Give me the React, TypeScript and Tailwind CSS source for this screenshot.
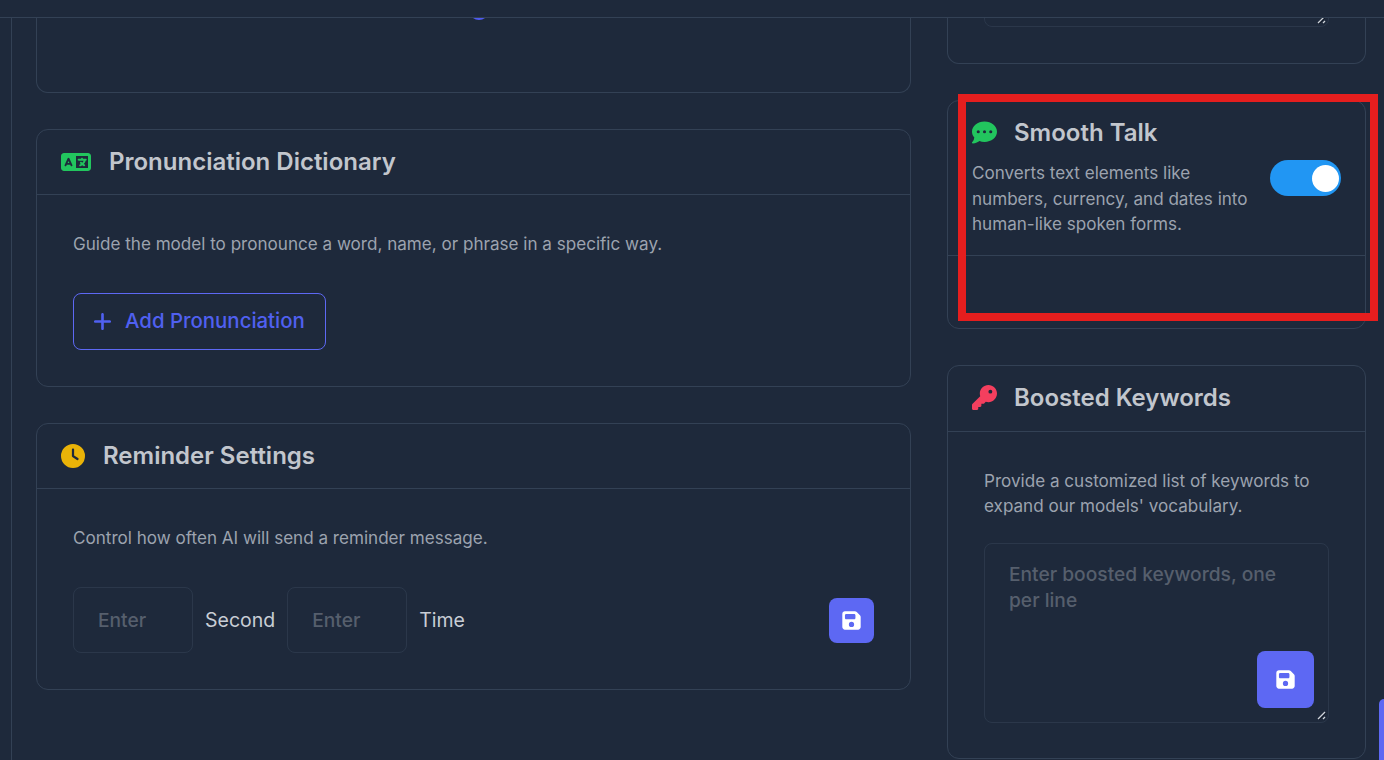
import { FaClock, FaCommentDots, FaFloppyDisk, FaKey, FaLanguage, FaPlus } from 'react-icons/fa6';
import type { ReactNode } from 'react';

function CardHeader({ icon, title, gap, tall }: { icon: ReactNode; title: string; gap: string; tall?: boolean }) {
  return (
    <div className={`flex ${tall ? 'h-[66px] pb-px' : 'h-[65px]'} items-center border-b border-[#334155] px-6 ${gap}`}>
      {icon}
      <h2 className="text-2xl font-semibold text-[#c2c6cd]">{title}</h2>
    </div>
  );
}

function SaveButton({ large }: { large?: boolean }) {
  return (
    <button
      className={
        large
          ? 'absolute right-[15px] bottom-[15px] flex h-[57px] w-[57px] items-center justify-center rounded-lg bg-[#5d68f3] text-white'
          : 'ml-auto flex h-[45px] w-[45px] items-center justify-center rounded-lg bg-[#5d68f3] text-white'
      }
    >
      <FaFloppyDisk className="h-[21px] w-[21px]" />
    </button>
  );
}

function NumberField() {
  return (
    <input
      placeholder="Enter"
      className="h-[66px] w-[120px] rounded-lg border border-[#334155]/60 bg-transparent px-6 text-[19.2px] font-medium text-gray-300 outline-none placeholder:text-[#565f6d]"
    />
  );
}

function ResizeGrip() {
  return (
    <svg className="pointer-events-none absolute right-[2px] bottom-[2px] h-[10px] w-[10px]" viewBox="0 0 10 10" fill="none">
      <path d="M1 8 8 1" stroke="#d1d5db" strokeWidth="1.2" />
      <path d="M2 9 9 2" stroke="#111827" strokeWidth="1" />
      <path d="M6 8 8 6" stroke="#d1d5db" strokeWidth="1.2" />
    </svg>
  );
}

export default function App() {
  return (
    <div className="relative h-[760px] w-[1384px] overflow-hidden bg-[#1e293b] font-['Inter',sans-serif]">
      <header className="h-[18px] border-b border-[#334155]" />

      <div className="flex h-[742px]">
        <aside className="w-3 shrink-0 border-r border-[#334155]" />

        <main className="flex flex-1 gap-9 pl-6">
          {/* Left column */}
          <div className="flex w-[875px] shrink-0 flex-col gap-9">
            <section className="relative h-[75px] rounded-b-xl border border-t-0 border-[#334155]">
              <span className="absolute top-0 left-[430px] h-[3px] w-6 overflow-hidden">
                <span className="absolute bottom-[1px] left-[2px] h-5 w-5 rounded-full bg-[#4f5bf0]" />
              </span>
            </section>

            <section className="rounded-xl border border-[#334155]">
              <CardHeader
                gap="gap-[18px]"
                title="Pronunciation Dictionary"
                icon={<FaLanguage className="h-6 w-[30px] text-[#22c55e]" />}
              />
              <div className="p-9">
                <p className="text-[17.08px] leading-[26px] text-[#9ca3af]">
                  Guide the model to pronounce a word, name, or phrase in a specific way.
                </p>
                <button className="mt-9 flex h-[57px] w-[253px] items-center gap-3 rounded-lg border border-[#5d68f3] pl-[18px] text-[20.4px] font-medium text-[#5060f0]">
                  <FaPlus className="h-[21px] w-[21px]" />
                  Add Pronunciation
                </button>
              </div>
            </section>

            <section className="rounded-xl border border-[#334155]">
              <CardHeader
                gap="gap-[18px]"
                title="Reminder Settings"
                icon={<FaClock className="h-6 w-6 text-[#eab308]" />}
              />
              <div className="p-9">
                <p className="text-[17.08px] leading-[26px] text-[#9ca3af]">
                  Control how often AI will send a reminder message.
                </p>
                <div className="mt-9 flex items-center text-[19.5px] text-[#c8cdd5]">
                  <NumberField />
                  <span className="mx-3 mt-[2px]">Second</span>
                  <NumberField />
                  <span className="mt-[2px] ml-3">Time</span>
                  <SaveButton />
                </div>
              </div>
            </section>
          </div>

          {/* Right column */}
          <div className="flex w-[419px] shrink-0 flex-col gap-9">
            <section className="h-[46px] rounded-b-xl border border-t-0 border-[#334155] px-9">
              <div className="relative flex h-[9px] items-end overflow-hidden">
                <textarea className="block h-[60px] w-full shrink-0 resize-none rounded-lg border border-[#334155]/60 bg-transparent" />
                <ResizeGrip />
              </div>
            </section>

            <section className="h-[229px] rounded-xl border border-[#334155]">
              <div className="h-[155px] border-b border-[#334155] pt-4 pr-6 pl-6">
                <div className="flex items-center gap-[17px]">
                  <FaCommentDots className="mb-[2px] h-[25px] w-[25px] text-[#22c55e]" />
                  <h2 className="text-2xl font-semibold text-[#c2c6cd]">Smooth Talk</h2>
                </div>
                <div className="mt-[11px] flex items-start justify-between">
                  <p className="w-[285px] text-[17.08px] leading-[25.5px] text-[#9ca3af]">
                    Converts text elements like numbers, currency, and dates into human-like spoken forms.
                  </p>
                  <span className="flex h-9 w-[71px] items-center justify-end rounded-full bg-[#2196f3] pr-[2px]">
                    <span className="h-[27px] w-[27px] rounded-full bg-white" />
                  </span>
                </div>
              </div>
            </section>

            <section className="h-[394px] rounded-xl border border-[#334155]">
              <CardHeader
                tall
                gap="gap-[17px]"
                title="Boosted Keywords"
                icon={<FaKey className="mb-[2px] h-[25px] w-[25px] text-[#f43f5e]" />}
              />
              <div className="p-9">
                <p className="text-[17.08px] leading-[25px] text-[#9ca3af]">
                  Provide a customized list of keywords to expand our models' vocabulary.
                </p>
                <div className="relative mt-[25px]">
                  <textarea
                    placeholder="Enter boosted keywords, one per line"
                    className="block h-[180px] w-full resize-none rounded-lg border border-[#334155]/60 bg-transparent px-6 py-[17px] text-[19.2px] leading-[26px] font-medium outline-none placeholder:text-[#565f6d]"
                  />
                  <SaveButton large />
                  <ResizeGrip />
                </div>
              </div>
            </section>
          </div>
        </main>
      </div>

      {/* annotation drawn on top of the screenshot */}
      <div className="pointer-events-none absolute top-[94px] left-[958px] h-[227px] w-[420px] border-8 border-[#e51e1e]" />
      <div className="absolute top-[699px] right-0 h-[61px] w-[5px] rounded-tl-md bg-[#5d68f3]" />
    </div>
  );
}
